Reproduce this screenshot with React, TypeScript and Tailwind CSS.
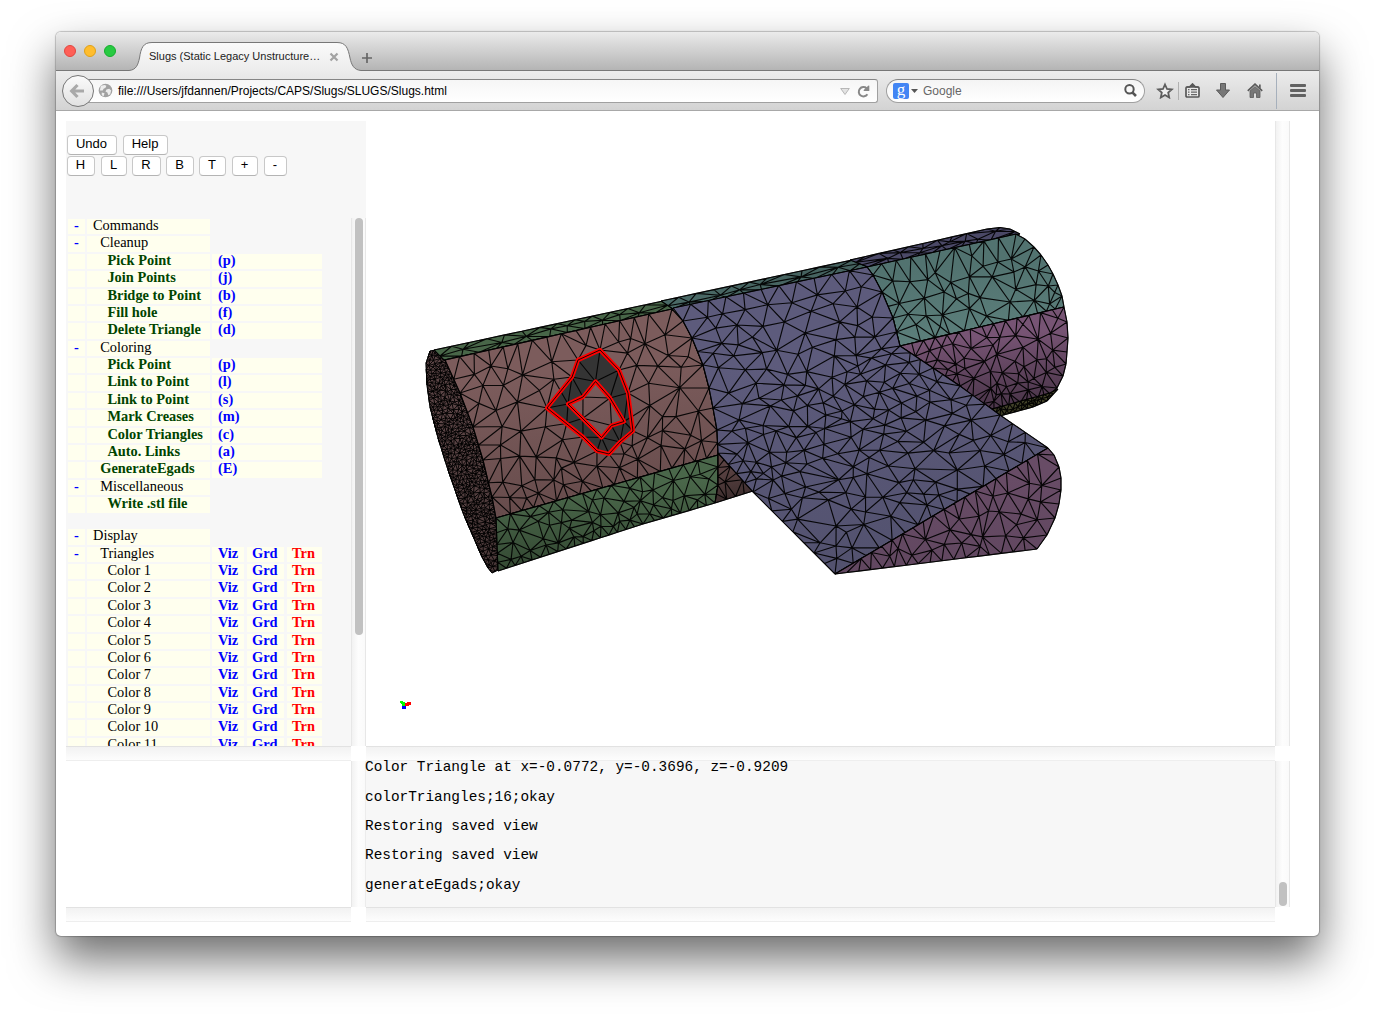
import React from "react";

type Pt = [number, number];

/* ---------- mesh generation ---------- */

function makeRandom(seed: number) {
  let s = seed;
  return () => {
    s = (s + 0x6d2b79f5) | 0;
    let t = Math.imul(s ^ (s >>> 15), 1 | s);
    t = (t + Math.imul(t ^ (t >>> 7), 61 | t)) ^ t;
    return ((t ^ (t >>> 14)) >>> 0) / 4294967296;
  };
}

function inside(p: Pt, poly: Pt[]) {
  let c = false;
  for (let i = 0, j = poly.length - 1; i < poly.length; j = i++) {
    const [xi, yi] = poly[i];
    const [xj, yj] = poly[j];
    if (yi > p[1] !== yj > p[1] && p[0] < ((xj - xi) * (p[1] - yi)) / (yj - yi) + xi) c = !c;
  }
  return c;
}

type Tri = { a: number; b: number; c: number; x: number; y: number; r: number };

function triangulate(points: Pt[]): Tri[] {
  const pts = points.slice();
  const n = pts.length;
  pts.push([-9000, -9000], [12000, -9000], [1000, 15000]);
  const make = (a: number, b: number, c: number): Tri => {
    const [ax, ay] = pts[a];
    const bx = pts[b][0] - ax;
    const by = pts[b][1] - ay;
    const cx = pts[c][0] - ax;
    const cy = pts[c][1] - ay;
    const d = 2 * (bx * cy - by * cx) || 1e-9;
    const ux = (cy * (bx * bx + by * by) - by * (cx * cx + cy * cy)) / d;
    const uy = (bx * (cx * cx + cy * cy) - cx * (bx * bx + by * by)) / d;
    return { a, b, c, x: ax + ux, y: ay + uy, r: ux * ux + uy * uy };
  };
  let tris: Tri[] = [make(n, n + 1, n + 2)];
  for (let i = 0; i < n; i++) {
    const [px, py] = pts[i];
    const keep: Tri[] = [];
    const edges = new Map<number, [number, number]>();
    const flip = (u: number, v: number) => {
      const k = Math.min(u, v) * 100000 + Math.max(u, v);
      if (edges.has(k)) edges.delete(k);
      else edges.set(k, [u, v]);
    };
    for (const t of tris) {
      const dx = px - t.x;
      const dy = py - t.y;
      if (dx * dx + dy * dy < t.r) {
        flip(t.a, t.b);
        flip(t.b, t.c);
        flip(t.c, t.a);
      } else keep.push(t);
    }
    edges.forEach(([u, v]) => keep.push(make(u, v, i)));
    tris = keep;
  }
  return tris.filter((t) => t.a < n && t.b < n && t.c < n);
}

type Region = {
  id: string;
  poly: Pt[];
  top: string;
  bottom: string;
  size: (x: number, y: number) => number;
  stretch?: number;
  angle?: number;
  fixed?: Pt[];
  width?: number;
};

function meshPath(region: Region, seed: number) {
  const rnd = makeRandom(seed);
  const ang = region.angle ?? 0;
  const k = region.stretch ?? 1;
  const co = Math.cos(ang);
  const si = Math.sin(ang);
  const warp = ([x, y]: Pt): Pt => [x * co + y * si, (-x * si + y * co) * k];
  const real: Pt[] = [];
  const warped: Pt[] = [];
  const add = (p: Pt, f: number) => {
    const w = warp(p);
    const h = region.size(p[0], p[1]) * f;
    for (const q of warped) {
      const dx = q[0] - w[0];
      const dy = q[1] - w[1];
      if (dx * dx + dy * dy < h * h) return;
    }
    real.push(p);
    warped.push([w[0] + (rnd() - 0.5) * 0.01, w[1] + (rnd() - 0.5) * 0.01]);
  };
  (region.fixed ?? []).forEach((p) => add(p, 0.05));
  const P = region.poly;
  P.forEach((p) => add(p, 0.25));
  P.forEach((p, i) => {
    const q = P[(i + 1) % P.length];
    const len = Math.hypot(q[0] - p[0], q[1] - p[1]);
    const m = Math.max(1, Math.round(len / 3));
    for (let j = 0; j < m; j++) add([p[0] + ((q[0] - p[0]) * j) / m, p[1] + ((q[1] - p[1]) * j) / m], 0.75);
  });
  const xs = P.map((p) => p[0]);
  const ys = P.map((p) => p[1]);
  const x0 = Math.min(...xs);
  const y0 = Math.min(...ys);
  const w = Math.max(...xs) - x0;
  const h = Math.max(...ys) - y0;
  const mid = region.size(x0 + w / 2, y0 + h / 2);
  const tries = Math.min(9000, Math.round(((w * h * k) / (mid * mid)) * 5));
  for (let i = 0; i < tries; i++) {
    const p: Pt = [x0 + rnd() * w, y0 + rnd() * h];
    if (inside(p, P)) add(p, 0.6 + rnd() * 0.5);
  }
  const seen = new Set<number>();
  let d = "";
  for (const t of triangulate(warped)) {
    const c: Pt = [
      (real[t.a][0] + real[t.b][0] + real[t.c][0]) / 3,
      (real[t.a][1] + real[t.b][1] + real[t.c][1]) / 3,
    ];
    if (!inside(c, P)) continue;
    for (const [u, v] of [[t.a, t.b], [t.b, t.c], [t.c, t.a]]) {
      const key = Math.min(u, v) * 100000 + Math.max(u, v);
      if (seen.has(key)) continue;
      seen.add(key);
      d += `M${real[u][0].toFixed(1)} ${real[u][1].toFixed(1)}L${real[v][0].toFixed(1)} ${real[v][1].toFixed(1)}`;
    }
  }
  return d;
}

const outerHole: Pt[] = [[600, 350], [578, 360], [572, 377], [547, 408], [583, 437], [597, 451], [609, 454], [620, 442], [633, 431], [628, 393], [619, 370]];
const innerHole: Pt[] = [[595.5, 381.5], [583, 397], [568, 404], [601.5, 437.5], [611.5, 425.5], [624, 421.5], [610, 398]];

const regions: Region[] = [
  {
    id: "cap", top: "#5c4546", bottom: "#4c3a3a", size: () => 3.6, width: 1,
    poly: [[430, 351], [426, 363], [427, 385], [430, 407], [438, 438], [447, 467], [463, 513], [482, 557], [488, 568], [492, 573], [498, 570], [498, 547], [496, 518], [492, 497], [483, 460], [473, 427], [460, 393], [452, 374], [445, 360], [436, 350]],
  },
  {
    id: "greenTop", top: "#486648", bottom: "#486648", size: () => 21, stretch: 4, angle: -0.21,
    poly: [[434, 350], [663, 301], [673, 309], [444, 360]],
  },
  {
    id: "tealTop", top: "#45625f", bottom: "#4b6b68", size: () => 24, stretch: 4.5, angle: -0.21,
    poly: [[661, 301], [852, 260], [868, 267], [673, 309]],
  },
  {
    id: "violetTop", top: "#4a4866", bottom: "#4c4a69", size: () => 19, stretch: 4.5, angle: -0.22,
    poly: [[850, 260], [987, 229], [1000, 227.5], [1010, 229], [1020, 234], [868, 267]],
  },
  {
    id: "brown", top: "#7c5c5c", bottom: "#674c4c", size: (x, y) => (y - (518 - (x - 496) * 0.28) > -32 ? 15 : 19.5),
    fixed: [...outerHole, ...innerHole],
    poly: [[445, 360], [672, 309], [683, 321], [692, 338], [703, 365], [709, 388], [713, 408], [717, 430], [718, 455], [496, 518], [492, 497], [483, 460], [473, 427], [460, 393]],
  },
  {
    id: "greenLow", top: "#4a674a", bottom: "#334832", size: (x, y) => Math.max(7.5, 16 - Math.max(0, y - (535 - (x - 496) * 0.28)) * 0.2), stretch: 1.25, angle: -0.3,
    poly: [[496, 518], [718, 455], [718, 485], [715, 503], [643, 524], [498, 571]],
  },
  {
    id: "brownLow", top: "#5a4242", bottom: "#3c2d2d", size: () => 10,
    poly: [[718, 453], [753, 491], [715, 503], [718, 485]],
  },
  {
    id: "teal", top: "#527370", bottom: "#5c7f7b", size: (x) => (x > 1030 ? 12 : 16.5),
    poly: [[867, 267], [1016, 234], [1025, 239], [1034, 247], [1041, 255], [1048, 265], [1053, 274], [1058, 285], [1062, 296], [1064, 307], [900, 346], [893, 318], [882, 292], [873, 275]],
  },
  {
    id: "plum", top: "#775474", bottom: "#4c364b", size: (x, y) => Math.max(6.2, 14 - Math.max(0, y - 345) * 0.13),
    poly: [[900, 346], [1064, 307], [1067, 322], [1068, 338], [1067, 352], [1066, 364], [1063, 376], [1057, 388], [1050, 394], [994, 410], [973, 397], [960, 386], [933, 368]],
  },
  {
    id: "olive", top: "#4a4a2e", bottom: "#3a3a24", size: () => 4.4,
    poly: [[992, 409], [1050, 393], [1058, 389], [1047, 401], [1033, 407], [1000, 416]],
  },
  {
    id: "blue", top: "#5d5b7c", bottom: "#53526f", stretch: 1.4,
    size: (x, y) => {
      const b = y - (345 + (900 - x) * 0.55);
      return b > -12 && b < 75 && x < 990 ? 16 : b >= 75 ? 21 : 23.5;
    },
    poly: [[673, 308], [867, 267], [873, 275], [882, 292], [893, 318], [900, 346], [933, 368], [960, 386], [1000, 415], [1048, 448], [835, 574], [753, 492], [718, 453], [717, 430], [713, 408], [709, 388], [703, 365], [692, 338], [683, 321]],
  },
  {
    id: "wingEnd", top: "#684c66", bottom: "#614760", size: () => 15,
    poly: [[1048, 448], [1054, 455], [1059, 467], [1061, 478], [1061, 490], [1059, 504], [1055, 518], [1047, 535], [1037, 549], [835, 574]],
  },
];

const meshes = regions.map((r, i) => meshPath(r, 17 + i * 31));
const join = (p: Pt[]) => p.map((q) => q.join(",")).join(" ");

function Model() {
  return (
    <svg viewBox="366 121 909 625" className="block h-[625px] w-[909px] bg-white">
      <defs>
        {regions.map((r) => (
          <linearGradient key={r.id} id={r.id} x1="0" y1="0" x2="0.15" y2="1">
            <stop offset="0.35" stopColor={r.top} />
            <stop offset="1" stopColor={r.bottom} />
          </linearGradient>
        ))}
      </defs>
      {regions.map((r, i) => (
        <g key={r.id}>
          <polygon points={join(r.poly)} fill={`url(#${r.id})`} stroke="#000" strokeWidth="0.7" />
          {r.id === "brown" && (
            <path fill="#343434" fillRule="evenodd" d={`M${outerHole.join("L")}ZM${innerHole.join("L")}Z`} />
          )}
          <path d={meshes[i]} fill="none" stroke="#000" strokeWidth={r.width ?? 1.15} strokeOpacity="0.92" />
        </g>
      ))}
      {[outerHole, innerHole].map((h, i) => (
        <g key={i} fill="none" strokeLinejoin="round">
          <polygon points={join(h)} stroke="#ff0000" strokeWidth="4.2" />
          <polygon points={join(h)} stroke="#200" strokeWidth="1" />
        </g>
      ))}
      <g shapeRendering="crispEdges">
        <path d="M405 703h2v-1h4v3h-2v1h-4z" fill="#ff0000" />
        <path d="M400 701h3v1h2v4h-3v-2h-1v-1h-1z" fill="#00ff00" />
        <path d="M402 706h4v3h-4z" fill="#0000ff" />
      </g>
    </svg>
  );
}

/* ---------- browser chrome ---------- */

function TitleBar() {
  return (
    <div className="relative h-[39px] bg-linear-to-b from-[#ebebeb] to-[#b3b3b3]">
      <svg viewBox="0 0 1264 40" className="absolute top-0 left-0 h-10 w-[1264px]">
        <defs>
          <linearGradient id="tabFill" x1="0" y1="0" x2="0" y2="1">
            <stop offset="0" stopColor="#fafafa" />
            <stop offset="1" stopColor="#ececec" />
          </linearGradient>
        </defs>
        <path
          d="M0 38.5H73C80 38 82 33 83.500 26C85 16 87 10.500 96 10.500H281C290 10.500 292 16 294 26C295.500 33 298 38 305 38.500H1264V40H0Z"
          fill="url(#tabFill)"
        />
        <path
          d="M0 38.5H73C80 38 82 33 83.500 26C85 16 87 10.500 96 10.500H281C290 10.500 292 16 294 26C295.500 33 298 38 305 38.500H1264"
          fill="none"
          stroke="#777"
        />
      </svg>
      <div className="absolute top-[13px] left-2 flex gap-2">
        <i className="h-3 w-3 rounded-full border border-[#e2463f] bg-[#ff5f57]" />
        <i className="h-3 w-3 rounded-full border border-[#e1a116] bg-[#ffbd2e]" />
        <i className="h-3 w-3 rounded-full border border-[#14ae2c] bg-[#28ca42]" />
      </div>
      <div className="absolute top-[16px] left-[93px] flex items-center text-[11px] leading-4 text-[#222]">
        <span className="w-[179px] whitespace-nowrap">Slugs (Static Legacy Unstructure…</span>
        <svg viewBox="0 0 10 10" className="mt-[2px] ml-px h-2.5 w-2.5">
          <path d="M1.500 1.500 8.500 8.500M8.500 1.500 1.500 8.500" stroke="#a3a3a3" strokeWidth="2.200" />
        </svg>
        <svg viewBox="0 0 12 12" className="mt-[3px] ml-[22px] h-3 w-3">
          <path d="M6 1V11M1 6H11" stroke="#666" strokeWidth="1.700" />
        </svg>
      </div>
    </div>
  );
}

function NavBar() {
  return (
    <div className="relative flex h-10 items-center border-b border-[#a8a8a8] bg-linear-to-b from-[#ececec] to-[#d3d3d3]">
      <div className="z-10 ml-1.5 flex h-8 w-8 items-center justify-center rounded-full border border-[#777] bg-linear-to-b from-[#fafafa] to-[#e2e2e2]">
        <svg viewBox="0 0 16 16" className="-ml-0.5 h-4 w-4">
          <path d="M8.500 2 2.700 8l5.800 6M3.500 8H15" fill="none" stroke="#a9a9a9" strokeWidth="3.200" />
        </svg>
      </div>
      <div className="-ml-1.5 flex h-6 w-[790px] items-center rounded-r-[3px] border border-[#a0a0a0] border-t-[#858585] bg-linear-to-b from-[#f6f6f6] to-white pl-[9px]">
        <svg viewBox="0 0 16 16" className="h-[15px] w-[15px]">
          <circle cx="8" cy="8" r="7.300" fill="#a2a2a2" />
          <path d="M3 3 7 2l2 1-1 2-2 1-1 2-3 0zM9 7l3-1 2 2-1 4-2 1-1-3-2-1zM4 10l3 1-1 3-2-1z" fill="#ededed" />
        </svg>
        <span className="ml-[5px] w-[722px] text-[12px] whitespace-nowrap text-black">
          file:///Users/jfdannen/Projects/CAPS/Slugs/SLUGS/Slugs.html
        </span>
        <svg viewBox="0 0 10 7" className="mt-px h-[7px] w-[10px] shrink-0">
          <path d="M.7.5H9.300L5 6.500Z" fill="#e3e3e3" stroke="#b0b0b0" strokeWidth=".9" />
        </svg>
        <svg viewBox="0 0 13 13" className="mt-px ml-[7px] h-[13px] w-[13px] shrink-0">
          <path d="M10.400 9.300A4.700 4.700 0 1 1 9.600 3.200" fill="none" stroke="#888" strokeWidth="2" />
          <path d="M6.700 6V5L11.500.5 12.300.8V6z" fill="#888" />
        </svg>
      </div>
      <div className="ml-2 flex h-6 w-[259px] items-center rounded-full border border-[#a0a0a0] border-t-[#858585] bg-linear-to-b from-[#f4f4f4] to-white pl-1.5">
        <span className="flex h-4 w-4 items-center justify-center rounded-[2px] bg-[#4285f4] pb-1 font-['Liberation_Serif',serif] text-[17px] leading-3 text-white">
          <span className="-mb-0.5 h-3">g</span>
        </span>
        <svg viewBox="0 0 7 4" className="ml-0.5 h-1 w-[7px]">
          <path d="M0 0H7L3.500 4Z" fill="#555" />
        </svg>
        <span className="ml-[5px] w-[201px] text-[12px] text-[#666]">Google</span>
        <svg viewBox="0 0 13 13" className="h-[13px] w-[13px]">
          <circle cx="5.500" cy="5.300" r="4.200" fill="none" stroke="#555" strokeWidth="2" />
          <path d="M8.300 8.300 12 12" stroke="#555" strokeWidth="2.600" />
        </svg>
      </div>
      <svg viewBox="0 0 18 17" className="ml-[11px] h-[17px] w-[18px]">
        <path d="m9 2.500 2 4.500 4.800.5-3.600 3.200 1 4.800L9 13l-4.200 2.500 1-4.800L2.200 7.500 7 7z" fill="#f0f0f0" stroke="#5d5d5d" strokeWidth="1.800" />
      </svg>
      <i className="ml-1 h-[18px] w-px bg-[#b0b0b0]" />
      <svg viewBox="0 0 15 15" className="ml-1.5 h-[15px] w-[15px]">
        <path d="M1 5Q1 4 2 4H4.500L7.500 1 10.500 4H13Q14 4 14 5V13Q14 14 13 14H2Q1 14 1 13Z" fill="#e9e9e9" stroke="#585858" strokeWidth="1.700" />
        <path d="M1.500 4H13.500M5 3H10" stroke="#585858" strokeWidth="1.500" />
        <path d="M3 6.700H4.500M6 6.700H12M3 9.200H4.500M6 9.200H12M3 11.700H4.500M6 11.700H12" stroke="#666" strokeWidth="1.300" />
      </svg>
      <svg viewBox="0 0 14 15" className="ml-4 h-[15px] w-[14px]">
        <path d="M4.500 .5H9.500V7H13.500L7 14.500.5 7H4.500Z" fill="#777" stroke="#5a5a5a" />
      </svg>
      <svg viewBox="0 0 16 15" className="ml-[17px] h-[15px] w-4">
        <path d="M.8 7.800 8 1.200 15.200 7.800" fill="none" stroke="#5a5a5a" strokeWidth="1.800" />
        <path d="M12 1.500h1.700V5.500L12 4z" fill="#5a5a5a" />
        <path d="M3 8 8 3.500 13 8V14.500H9.500V10H6.500V14.500H3Z" fill="#777" stroke="#5a5a5a" strokeWidth=".8" />
      </svg>
      <i className="ml-[13px] h-9 w-px bg-[#a6b0bc]" />
      <div className="ml-[13px] flex flex-col gap-0.5">
        <i className="h-[3px] w-4 rounded-[1px] bg-[#626262]" />
        <i className="h-[3px] w-4 rounded-[1px] bg-[#626262]" />
        <i className="h-[3px] w-4 rounded-[1px] bg-[#626262]" />
      </div>
    </div>
  );
}

/* ---------- page ---------- */

function VTrack({ thumb }: { thumb?: string }) {
  return (
    <div className="flex w-[15px] shrink-0 justify-center border-r border-l border-[#e7e7e7] bg-linear-to-r from-[#f2f2f2] via-[#fdfdfd] to-[#fafafa]">
      {thumb && <i className={`w-2 rounded-full bg-[#c1c1c1] ${thumb}`} />}
    </div>
  );
}

function HTrack() {
  return <div className="h-[15px] border-t border-b border-t-[#e2e2e2] border-b-[#eee] bg-linear-to-b from-[#f2f2f2] to-[#fdfdfd]" />;
}

function Btn({ label, width }: { label: string; width: string }) {
  return (
    <button className={`h-5 rounded-[4px] border border-[#c8c8c8] border-b-[#b4b4b4] bg-white pr-px pb-[2px] text-[13px] leading-4 text-black ${width}`}>
      {label}
    </button>
  );
}

type Row = { level: number; text: string; toggle?: boolean; bold?: boolean; hot?: string; flags?: boolean; gap?: boolean };

const rows: Row[] = [
  { level: 0, text: "Commands", toggle: true },
  { level: 1, text: "Cleanup", toggle: true },
  { level: 2, text: "Pick Point", bold: true, hot: "(p)" },
  { level: 2, text: "Join Points", bold: true, hot: "(j)" },
  { level: 2, text: "Bridge to Point", bold: true, hot: "(b)" },
  { level: 2, text: "Fill hole", bold: true, hot: "(f)" },
  { level: 2, text: "Delete Triangle", bold: true, hot: "(d)" },
  { level: 1, text: "Coloring", toggle: true },
  { level: 2, text: "Pick Point", bold: true, hot: "(p)" },
  { level: 2, text: "Link to Point", bold: true, hot: "(l)" },
  { level: 2, text: "Link to Point", bold: true, hot: "(s)" },
  { level: 2, text: "Mark Creases", bold: true, hot: "(m)" },
  { level: 2, text: "Color Triangles", bold: true, hot: "(c)" },
  { level: 2, text: "Auto. Links", bold: true, hot: "(a)" },
  { level: 1, text: "GenerateEgads", bold: true, hot: "(E)" },
  { level: 1, text: "Miscellaneous", toggle: true },
  { level: 2, text: "Write .stl file", bold: true },
  { level: 0, text: "Display", toggle: true, gap: true },
  { level: 1, text: "Triangles", toggle: true, flags: true },
  ...Array.from({ length: 11 }, (_, i): Row => ({ level: 2, text: `Color ${i + 1}`, flags: true })),
];

const indent = ["pl-[6px]", "pl-[13.2px]", "pl-[20.4px]"];

function TreeRow({ r }: { r: Row }) {
  return (
    <div className={`flex h-[15.4px] shrink-0 leading-[13.6px] whitespace-nowrap ${r.gap ? "mt-[16.6px]" : "mt-[2px]"}`}>
      <span className="w-[17px] bg-[#ffffee] pl-1.5 font-bold text-[#0000ff]">{r.toggle ? "-" : ""}</span>
      <span className={`ml-0.5 w-[123px] bg-[#ffffee] ${indent[r.level]} ${r.bold ? "font-bold text-[#004400]" : "text-black"}`}>{r.text}</span>
      {r.hot && <span className="ml-0.5 w-[110px] bg-[#ffffee] pl-1.5 font-bold text-[#0000ff]">{r.hot}</span>}
      {r.flags && (
        <>
          <span className="ml-0.5 w-8 bg-[#ffffee] pl-1.5 font-bold text-[#0000ff]">Viz</span>
          <span className="ml-[3px] w-[37px] bg-[#ffffee] pl-[5px] font-bold text-[#0000ff]">Grd</span>
          <span className="ml-[3px] w-[35px] bg-[#ffffee] pl-[5px] font-bold text-[#ff0000]">Trn</span>
        </>
      )}
    </div>
  );
}

const log = [
  "Color Triangle at x=-0.0772, y=-0.3696, z=-0.9209",
  "colorTriangles;16;okay",
  "Restoring saved view",
  "Restoring saved view",
  "generateEgads;okay",
];

export default function App() {
  return (
    <div className="h-[1016px] w-[1375px] overflow-hidden bg-white pt-8 pl-14 font-['Liberation_Sans',Arial,sans-serif]">
      <div className="h-[904px] w-[1263px] overflow-hidden rounded-[5px] bg-white shadow-[0_0_1px_1px_rgba(0,0,0,0.22),0_23px_46px_0px_rgba(0,0,0,0.58)]">
        <TitleBar />
        <NavBar />
        <div className="grid w-[1224px] grid-cols-[300px_924px] pt-[10px] pl-[10px]">
          <div className="flex h-[625px] flex-col bg-[#f7f7f7]">
            <div className="h-[97px] shrink-0 pt-[14px] pl-px">
              <div className="flex gap-1.5">
                <Btn label="Undo" width="w-[50px]" />
                <Btn label="Help" width="w-[45px]" />
              </div>
              <div className="mt-px flex">
                <Btn label="H" width="w-7" />
                <Btn label="L" width="ml-1.5 w-[26px]" />
                <Btn label="R" width="ml-[5px] w-[29px]" />
                <Btn label="B" width="ml-[5px] w-[28px]" />
                <Btn label="T" width="ml-[5px] w-[27px]" />
                <Btn label="+" width="ml-1.5 w-[26px]" />
                <Btn label="-" width="ml-1.5 w-[23px]" />
              </div>
            </div>
            <div className="flex h-[528px]">
              <div className="w-[285px] overflow-hidden pl-0.5 font-['Liberation_Serif',serif] text-[14.4px]">
                <div className="-mt-[1.05px] flex flex-col">
                  {rows.map((r, i) => (
                    <TreeRow key={i} r={r} />
                  ))}
                </div>
              </div>
              <VTrack thumb="h-[417px]" />
            </div>
          </div>
          <div className="flex h-[625px]">
            <Model />
            <VTrack />
          </div>
          <div className="w-[285px]"><HTrack /></div>
          <div className="w-[909px]"><HTrack /></div>
          <div className="flex h-[146px]">
            <div className="w-[285px]" />
            <VTrack />
          </div>
          <div className="flex h-[146px]">
            <div className="-ml-px flex w-[910px] flex-col gap-[13.3px] border-l border-[#ececec] bg-[#f7f7f7] font-['Liberation_Mono',monospace] text-[14.4px] leading-4 text-black">
              {log.map((l, i) => (
                <span key={i} className="-mt-[1.6px] mb-[1.6px] -ml-px whitespace-pre">{l}</span>
              ))}
            </div>
            <div className="flex w-[15px] items-end justify-center border-r border-l border-[#e7e7e7] bg-linear-to-r from-[#f2f2f2] via-[#fdfdfd] to-[#fafafa] pb-px">
              <i className="h-6 w-2 rounded-full bg-[#c1c1c1]" />
            </div>
          </div>
          <div className="w-[285px]"><HTrack /></div>
          <div className="w-[909px]"><HTrack /></div>
        </div>
      </div>
    </div>
  );
}
